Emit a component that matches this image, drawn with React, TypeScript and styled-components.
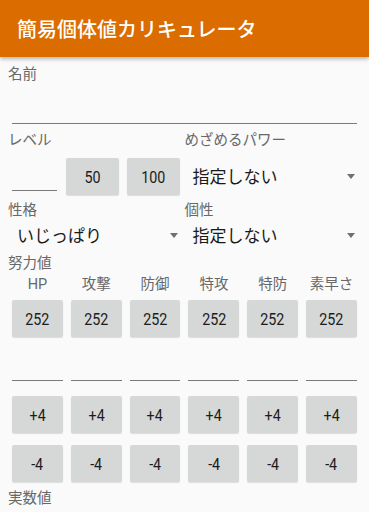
import React from "react";
import styled, { createGlobalStyle } from "styled-components";

const GlobalStyle = createGlobalStyle`
  html, body {
    margin: 0;
    padding: 0;
    background: #fafafa;
  }
  body {
    font-family: Roboto, "Noto Sans CJK JP", sans-serif;
  }
`;

const STATS = ["HP", "攻撃", "防御", "特攻", "特防", "素早さ"];

const App = () => {
  return (
    <Page>
      <GlobalStyle />
      <AppBar>簡易個体値カリキュレータ</AppBar>
      <Content>
        <Label>名前</Label>
        <NameField />

        <TwoCol $top={8}>
          <div>
            <Label>レベル</Label>
            <LevelRow>
              <LevelInput />
              <Btn $w={53}>
                <BtnText>50</BtnText>
              </Btn>
              <Btn $w={53}>
                <BtnText>100</BtnText>
              </Btn>
            </LevelRow>
          </div>
          <div>
            <Label>めざめるパワー</Label>
            <Spinner $h={51} $pl={8} $pr={6}>
              指定しない
              <Arrow />
            </Spinner>
          </div>
        </TwoCol>

        <TwoCol $top={1}>
          <div>
            <Label>性格</Label>
            <Spinner $h={28} $pl={9} $pr={7}>
              いじっぱり
              <Arrow />
            </Spinner>
          </div>
          <div>
            <Label>個性</Label>
            <Spinner $h={28} $pl={8} $pr={6}>
              指定しない
              <Arrow />
            </Spinner>
          </div>
        </TwoCol>

        <Label $top={7}>努力値</Label>
        <StatGrid>
          {STATS.map((s) => (
            <ColHead key={s}>{s}</ColHead>
          ))}
          {STATS.map((s) => (
            <Cell key={"v" + s}>
              <Btn>
                <BtnText>252</BtnText>
              </Btn>
            </Cell>
          ))}
          {STATS.map((s) => (
            <EditCell key={"e" + s}>
              <StatInput />
            </EditCell>
          ))}
          {STATS.map((s) => (
            <Cell key={"p" + s}>
              <Btn>
                <BtnText>+4</BtnText>
              </Btn>
            </Cell>
          ))}
          {STATS.map((s) => (
            <Cell key={"m" + s}>
              <Btn>
                <BtnText>-4</BtnText>
              </Btn>
            </Cell>
          ))}
        </StatGrid>
        <Label $top={2}>実数値</Label>
      </Content>
    </Page>
  );
};

export default App;

const Page = styled.div`
  width: 369px;
  height: 512px;
  overflow: hidden;
  background: #fafafa;
`;

const AppBar = styled.div`
  height: 57px;
  background: #db6c00;
  color: #ffffff;
  font-size: 20px;
  font-weight: 500;
  display: flex;
  align-items: center;
  padding-left: 17px;
  box-shadow: 0 2px 4px rgba(0, 0, 0, 0.28);
  position: relative;
  z-index: 1;
`;

const Content = styled.div`
  padding: 9px 8px 0;
`;

const Label = styled.div<{ $top?: number }>`
  font-size: 14.5px;
  line-height: 18px;
  color: #686868;
  margin-top: ${(p) => p.$top ?? 0}px;
`;

const NameField = styled.div`
  height: 39px;
  margin: 0 4px;
  border-bottom: 1px solid #7a7a7a;
`;

const TwoCol = styled.div<{ $top: number }>`
  display: grid;
  grid-template-columns: 1fr 1fr;
  margin-top: ${(p) => p.$top}px;
`;

const LevelRow = styled.div`
  height: 51px;
  display: flex;
  align-items: flex-end;
  padding-bottom: 6px;
  box-sizing: border-box;
  gap: 8px;
`;

const LevelInput = styled.div`
  width: 45px;
  margin: 0 1px 4px 4px;
  border-bottom: 1px solid #7a7a7a;
`;

const Btn = styled.div<{ $w?: number }>`
  width: ${(p) => (p.$w ? `${p.$w}px` : "100%")};
  height: 37px;
  background: #d6d7d7;
  border-radius: 2px;
  box-shadow: 0 1px 1px rgba(0, 0, 0, 0.12);
  display: flex;
  align-items: center;
  justify-content: center;
  color: #1c1c1c;
`;

// the digits in the shot are tall and narrow
const BtnText = styled.span`
  display: inline-block;
  font-size: 17px;
  transform: scaleX(0.84);
`;

const Spinner = styled.div<{ $h: number; $pl: number; $pr: number }>`
  height: ${(p) => p.$h}px;
  display: flex;
  align-items: center;
  justify-content: space-between;
  padding: 0 ${(p) => p.$pr}px 0 ${(p) => p.$pl}px;
  font-size: 17px;
  color: #1a1a1a;
`;

const Arrow = styled.span`
  width: 0;
  height: 0;
  border-left: 4.5px solid transparent;
  border-right: 4.5px solid transparent;
  border-top: 5px solid #707070;
  margin-top: 2px;
`;

const StatGrid = styled.div`
  display: grid;
  grid-template-columns: repeat(6, 1fr);
  margin-top: 3px;
`;

const ColHead = styled.div`
  font-size: 14.5px;
  line-height: 18px;
  color: #686868;
  text-align: center;
`;

const Cell = styled.div`
  height: 49px;
  padding: 0 4px;
  display: flex;
  align-items: center;
`;

const EditCell = styled.div`
  height: 47px;
  padding: 0 4px;
`;

const StatInput = styled.div`
  height: 37px;
  border-bottom: 1px solid #7a7a7a;
`;
